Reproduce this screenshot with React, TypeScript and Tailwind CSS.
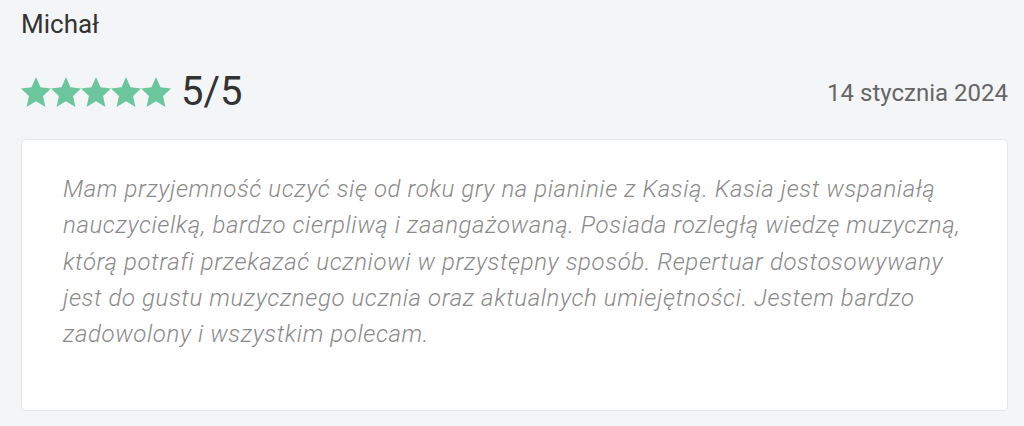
function Star() {
  return (
    <svg width="30" height="30" viewBox="1 1.2 22 20.7" preserveAspectRatio="none" className="block">
      <path
        fill="#6cc69d"
        d="M12 1.2l3.3 7.1 7.7.8-5.8 5.2 1.7 7.6L12 18l-6.9 3.9 1.7-7.6L1 9.1l7.7-.8z"
      />
    </svg>
  );
}

export default function App() {
  return (
    <div
      className="min-h-[426px] w-[1024px] bg-[#f4f5f7] pl-[21px] pr-[16px] pt-[6px]"
      style={{ fontFamily: "Roboto, 'Noto Sans', sans-serif" }}
    >
      <div className="text-[26px] leading-[36px] text-[#333]">Michał</div>

      <div className="mt-[30px] flex items-start justify-between">
        <div className="flex items-start">
          <div className="mt-[5px] flex">
            <Star />
            <Star />
            <Star />
            <Star />
            <Star />
          </div>
          <span className="ml-[10px] text-[40px] leading-[40px] text-[#333]">5/5</span>
        </div>
        <span className="mt-[7px] text-[24px] leading-[28px] text-[#666]">14 stycznia 2024</span>
      </div>

      <div className="mt-[27px] rounded-[5px] border border-[#e4e6ea] bg-white px-[41px] pt-[31px] pb-[58px]">
        <p className="text-[24px] leading-[36.25px] font-light italic tracking-[0.6px] text-[#8a8a8a]">
          Mam przyjemność uczyć się od roku gry na pianinie z Kasią. Kasia jest wspaniałą
          nauczycielką, bardzo cierpliwą i zaangażowaną. Posiada rozległą wiedzę muzyczną,
          którą potrafi przekazać uczniowi w przystępny sposób. Repertuar dostosowywany
          jest do gustu muzycznego ucznia oraz aktualnych umiejętności. Jestem bardzo
          zadowolony i wszystkim polecam.
        </p>
      </div>
    </div>
  );
}
